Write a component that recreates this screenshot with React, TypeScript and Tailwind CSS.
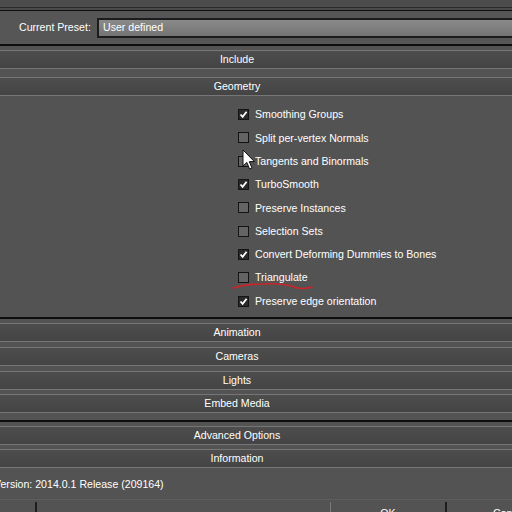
import React from 'react';

const GEOMETRY_OPTIONS: { label: string; checked: boolean }[] = [
  { label: 'Smoothing Groups', checked: true },
  { label: 'Split per-vertex Normals', checked: false },
  { label: 'Tangents and Binormals', checked: false },
  { label: 'TurboSmooth', checked: true },
  { label: 'Preserve Instances', checked: false },
  { label: 'Selection Sets', checked: false },
  { label: 'Convert Deforming Dummies to Bones', checked: true },
  { label: 'Triangulate', checked: false },
  { label: 'Preserve edge orientation', checked: true },
];

const RolloutHeader: React.FC<{ title: string; className?: string }> = ({ title, className }) => (
  <div
    className={`h-[19px] shrink-0 flex items-center justify-center pr-[38px] border-y border-[#767676] bg-[#474747] bg-gradient-to-b from-[#4d4d4d] to-[#444444] text-[10.6px] leading-none text-white ${className ?? ''}`}
  >
    {title}
  </div>
);

const CheckBox: React.FC<{ checked: boolean }> = ({ checked }) => (
  <div
    className={`w-[11px] h-[11px] shrink-0 border border-[#141414] flex items-center justify-center ${
      checked ? 'bg-[#2a2a2a]' : 'bg-[#646464]'
    }`}
  >
    {checked && (
      <svg width="9" height="9" viewBox="0 0 9 9">
        <path d="M1.5 4.5 L3.6 6.8 L7.6 1.8" fill="none" stroke="#ffffff" strokeWidth="1.8" />
      </svg>
    )}
  </div>
);

const App: React.FC = () => {
  return (
    <div
      className="relative w-[512px] h-[512px] overflow-hidden bg-[#535353] flex flex-col select-none"
      style={{ fontFamily: '"Liberation Sans", Arial, sans-serif' }}
    >
      {/* title strip */}
      <div className="h-[7px] shrink-0 bg-[#4c4c4c]" />
      <div className="h-px shrink-0 bg-[#2a2a2a]" />
      <div className="h-[2px] shrink-0 bg-[#4a4a4a]" />
      <div className="h-px shrink-0 bg-[#0e0e0e]" />

      {/* preset */}
      <div className="h-[33px] shrink-0 flex items-center bg-[#565656]">
        <div className="w-[97px] shrink-0 pl-[19px] text-[10.6px] text-white">Current Preset:</div>
        <div className="flex-1 h-[20px] flex items-center pl-[4px] border-2 border-[#1c1c1c] border-r-0 bg-gradient-to-b from-[#8a8a8a] to-[#747474] text-[10.6px] text-white">
          User defined
        </div>
      </div>
      <div className="h-[2px] shrink-0 bg-[#0e0e0e]" />

      <RolloutHeader title="Include" className="mt-[4px]" />
      <RolloutHeader title="Geometry" className="mt-[8px]" />

      {/* geometry options */}
      <div className="shrink-0 flex flex-col pt-[7px] pb-[4px]">
        {GEOMETRY_OPTIONS.map((opt) => (
          <div key={opt.label} className="h-[23.3px] flex items-center gap-[6px] pl-[238px]">
            <CheckBox checked={opt.checked} />
            <span className="text-[10.6px] leading-none text-white">{opt.label}</span>
          </div>
        ))}
      </div>
      <div className="h-[2px] shrink-0 bg-[#0e0e0e]" />

      <RolloutHeader title="Animation" className="mt-[4px]" />
      <RolloutHeader title="Cameras" className="mt-[5px]" />
      <RolloutHeader title="Lights" className="mt-[5px]" />
      <RolloutHeader title="Embed Media" className="mt-[4px]" />
      <div className="h-[2px] shrink-0 mt-[7px] bg-[#0e0e0e]" />
      <RolloutHeader title="Advanced Options" className="mt-[4px]" />
      <RolloutHeader title="Information" className="mt-[4px]" />

      {/* version */}
      <div className="h-[31px] shrink-0 flex items-center pt-[3px]">
        <span className="-ml-[6px] text-[10.6px] text-white">Version: 2014.0.1 Release (209164)</span>
      </div>

      {/* buttons */}
      <div className="flex-1 flex border-t border-[#5e5e5e]">
        <div className="w-[37px] shrink-0 border-r-2 border-[#1e1e1e] mt-[2px]" />
        <div className="flex-1" />
        <div className="w-[117px] shrink-0 border-l border-[#7a7a7a] border-r-2 border-r-[#1e1e1e] mt-[2px] flex justify-center pt-[6px] text-[10.6px] leading-none text-white">
          OK
        </div>
        <div className="w-[65px] shrink-0 pl-[46px] pt-[6px] mt-[2px] text-[10.6px] leading-none text-white">
          Cancel
        </div>
      </div>

      {/* red annotation under Triangulate */}
      <svg className="absolute left-0 top-0 pointer-events-none" width="512" height="512">
        <path
          d="M233 288 Q 245 284 262 284 Q 284 283 294 287 Q 302 290 312 287"
          fill="none"
          stroke="#c8262a"
          strokeWidth="1.6"
          strokeLinecap="round"
        />
      </svg>

      {/* mouse cursor */}
      <svg className="absolute left-[242px] top-[149px] pointer-events-none" width="14" height="22" viewBox="0 0 14 22">
        <path
          d="M1 1 L1 17 L4.8 13.4 L7.6 20 L10 19 L7.3 12.6 L12.4 12.6 Z"
          fill="#ffffff"
          stroke="#111111"
          strokeWidth="1"
          strokeLinejoin="round"
        />
      </svg>
    </div>
  );
};

export default App;
